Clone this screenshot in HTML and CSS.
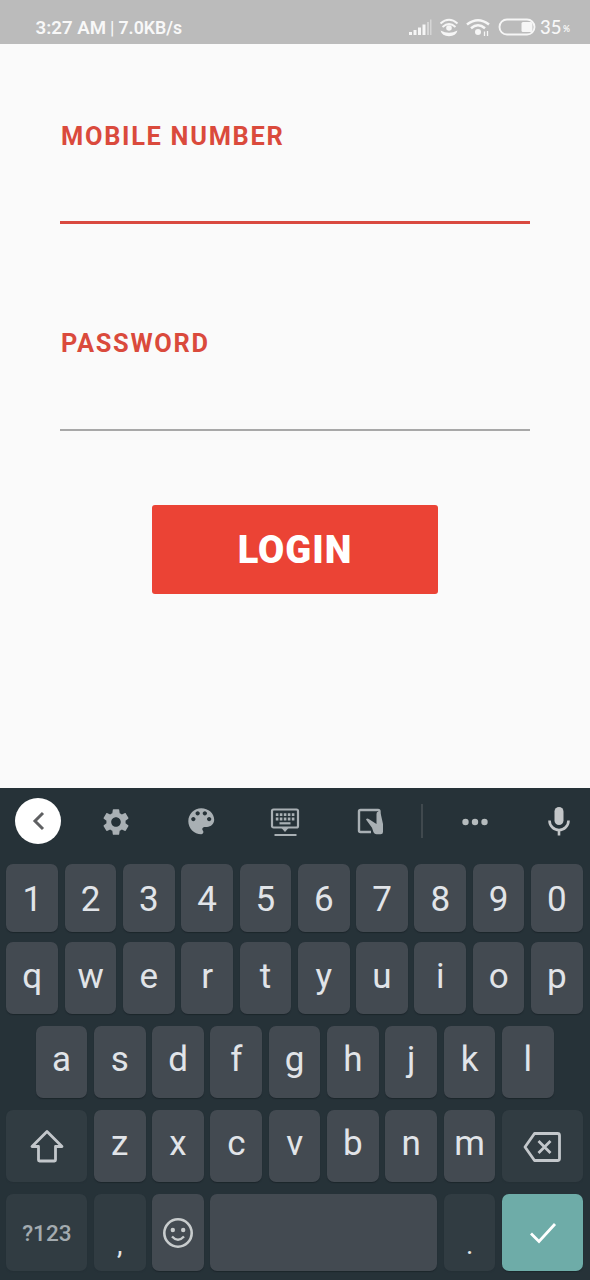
FILE: index.html
```html
<!DOCTYPE html>
<html lang="en">
<head>
<meta charset="utf-8">
<title>Login</title>
<link rel="stylesheet" href="styles.css">
</head>
<body>
<header class="status">
  <div class="clock"><span class="time">3:27 AM</span><span class="bar">|</span><span class="speed">7.0KB/s</span></div>
  <svg class="signals" width="138" height="22" viewBox="0 0 138 22" fill="none" stroke="#f6f6f6">
    <g fill="#f6f6f6" stroke="none">
      <path d="M1 17h3v3H1zM5.500 15h3v5h-3zM10 12.500h3v7.500h-3zM14.500 9.500h3V20h-3z"/>
      <path d="M19 7h2v13h-2zM22 4.500h1.500V20H22z" opacity=".45"/>
      <circle cx="41" cy="13" r="2.800"/><circle cx="70" cy="17" r="3"/>
      <path d="M32.500 15.500q8.500 4.500 17 0-1.500 5.700-8.500 5.700t-8.500-5.700z"/>
      <rect x="113.500" y="7" width="11" height="10" rx="1.500"/>
    </g>
    <g stroke-width="1.900">
      <path d="M32.500 8.500q8.500-7.500 17 0M34.500 12q6.500-6 13 0"/>
      <path d="M36.500 15.500q4.500 2.500 9 0" stroke="#bbb" stroke-width="1"/>
      <path d="M59 9.500q11-8.500 22 0M63 13.300q7-6 14 0" stroke-width="2.500"/>
      <path d="M76.500 16.500v4.500M79.500 16v5" stroke-width="1.300"/>
      <rect x="91.500" y="4.500" width="35" height="15" rx="7.500"/>
    </g>
  </svg>
  <span class="battery">35</span><span class="percent">%</span>
</header>

<main class="form">
  <div class="field active"><span class="label">MOBILE NUMBER</span></div>
  <div class="field"><span class="label">PASSWORD</span></div>
  <button class="login">LOGIN</button>
</main>

<section class="keyboard">
  <div class="tools">
    <span class="back"><svg width="46" height="46" viewBox="0 0 46 46"><path d="M28 15l-8 8 8 8" fill="none" stroke="#5f6062" stroke-width="3"/></svg></span>
    <svg width="32" height="32" viewBox="0 0 24 24" fill="#a9b0b4"><path d="M19.140 12.940c.04-.3.060-.61.060-.94 0-.32-.02-.64-.07-.94l2.030-1.580c.18-.14.230-.41.120-.61l-1.920-3.320c-.12-.22-.37-.29-.59-.22l-2.390.96c-.5-.38-1.030-.7-1.620-.94l-.36-2.540c-.04-.24-.24-.41-.48-.41h-3.840c-.24 0-.43.17-.47.410l-.36 2.540c-.59.240-1.130.570-1.620.940l-2.390-.96c-.22-.08-.47 0-.59.220L2.740 8.870c-.12.210-.08.470.120.610l2.030 1.580c-.05.300-.09.630-.09.940s.02.640.070.940l-2.030 1.580c-.18.140-.23.410-.12.610l1.920 3.320c.12.220.37.290.59.220l2.390-.96c.5.380 1.030.7 1.620.940l.36 2.540c.05.240.24.410.48.410h3.840c.24 0 .44-.17.470-.41l.36-2.540c.59-.24 1.130-.56 1.620-.94l2.390.96c.22.080.47 0 .59-.22l1.920-3.320c.12-.22.070-.47-.12-.61l-2.010-1.580zM12 15.600c-1.980 0-3.600-1.620-3.600-3.600s1.620-3.600 3.600-3.600 3.600 1.620 3.600 3.600-1.620 3.600-3.600 3.600z"/></svg>
    <svg width="34.500" height="34.500" viewBox="0 0 24 24" fill="#a9b0b4"><path d="M12 3c-4.970 0-9 4.030-9 9s4.030 9 9 9c.83 0 1.500-.67 1.500-1.500 0-.39-.15-.74-.39-1.010-.23-.26-.38-.61-.38-.99 0-.83.67-1.500 1.500-1.500H16c2.760 0 5-2.240 5-5 0-4.420-4.030-8-9-8zm-5.500 9c-.83 0-1.500-.67-1.500-1.500S5.670 9 6.500 9 8 9.670 8 10.500 7.330 12 6.500 12zm3-4C8.670 8 8 7.330 8 6.500S8.670 5 9.500 5s1.500.67 1.500 1.500S10.330 8 9.500 8zm5 0c-.83 0-1.500-.67-1.500-1.500S13.670 5 14.500 5s1.500.67 1.500 1.500S15.330 8 14.500 8zm3 4c-.83 0-1.500-.67-1.500-1.500S16.670 9 17.500 9s1.500.67 1.500 1.500-.67 1.500-1.500 1.500z"/></svg>
    <svg width="30" height="28" viewBox="0 0 30 28" fill="none" stroke="#a9b0b4" stroke-width="2.200"><rect x="2" y="1.500" width="26" height="18" rx="1.500"/><path d="M5.800 6.700h18.600M5.800 11h18.600" stroke-width="2.800" stroke-dasharray="2.600 1.400"/><path d="M9.500 15.300h11"/><path d="M4.500 27h22" stroke-width="2"/><path d="M11.500 20h7L15 24z" fill="#a9b0b4" stroke="none"/></svg>
    <svg width="26" height="27" viewBox="0 0 26 27"><path d="M14 24H3.500Q2 24 2 22.500V3.500Q2 2 3.500 2H21Q22.500 2 22.500 3.500V9" fill="none" stroke="#a9b0b4" stroke-width="2.400"/><path d="M9 11.500q1-1.800 2.700-.6L19.500 16V6q0-3 3-2l1.500 3 2 9v8q0 2.300-2.500 2.300h-4q-2 0-3-2l-1.500-4.500z" fill="#a9b0b4"/></svg>
    <i class="divider"></i>
    <svg width="26" height="8" viewBox="0 0 26 8" fill="#b5bbbd"><circle cx="3.500" cy="4" r="3.200"/><circle cx="13" cy="4" r="3.200"/><circle cx="22.500" cy="4" r="3.200"/></svg>
    <svg class="mic" width="22" height="30" viewBox="0 0 22 30"><rect x="6.500" y="1" width="9" height="18" rx="4.500" fill="#c3c6c8"/><path d="M1.500 14.500a9.500 9.500 0 0 0 19 0M11 24v5.500" fill="none" stroke="#c3c6c8" stroke-width="2.600"/></svg>
  </div>

  <div class="row digits"><span class="key">1</span><span class="key">2</span><span class="key">3</span><span class="key">4</span><span class="key">5</span><span class="key">6</span><span class="key">7</span><span class="key">8</span><span class="key">9</span><span class="key">0</span></div>
  <div class="row upper"><span class="key">q</span><span class="key">w</span><span class="key">e</span><span class="key">r</span><span class="key">t</span><span class="key">y</span><span class="key">u</span><span class="key">i</span><span class="key">o</span><span class="key">p</span></div>
  <div class="row home"><span class="key">a</span><span class="key">s</span><span class="key">d</span><span class="key">f</span><span class="key">g</span><span class="key">h</span><span class="key">j</span><span class="key">k</span><span class="key">l</span></div>
  <div class="row lower">
    <span class="key dark wide"><svg width="34" height="34" viewBox="0 0 34 34"><path d="M17 2.500L2 17.500h6.500V31q0 1 1 1h15q1 0 1-1V17.500H32z" fill="none" stroke="#c3c7cb" stroke-width="2.800" stroke-linejoin="round"/></svg></span>
    <span class="key">z</span><span class="key">x</span><span class="key">c</span><span class="key">v</span><span class="key">b</span><span class="key">n</span><span class="key">m</span>
    <span class="key dark wide delete"><svg width="38" height="30" viewBox="0 0 38 30" fill="none" stroke="#c3c7cb" stroke-width="2.800" stroke-linejoin="round"><path d="M11.500 1.500H34.500Q36.500 1.500 36.500 3.500V26.500Q36.500 28.500 34.500 28.500H11.500L2 15z"/><path d="M15.500 9l12 12M27.500 9l-12 12"/></svg></span>
  </div>
  <div class="row bottom">
    <span class="key dark wide symbols">?123</span>
    <span class="key dark punct">,</span>
    <span class="key"><svg width="32" height="32" viewBox="0 0 32 32"><circle cx="16" cy="16" r="13.700" fill="none" stroke="#c8cccd" stroke-width="2.600"/><circle cx="10.800" cy="13" r="2.200" fill="#c8cccd"/><circle cx="21.200" cy="13" r="2.200" fill="#c8cccd"/><path d="M10 19.500q6 6.500 12 0" fill="none" stroke="#c8cccd" stroke-width="2.400"/></svg></span>
    <span class="key space"></span>
    <span class="key dark punct">.</span>
    <span class="key wide enter"><svg width="28" height="22" viewBox="0 0 28 22"><path d="M2 11.500l8 8L26 2" fill="none" stroke="#fff" stroke-width="2.800"/></svg></span>
  </div>
</section>
</body>
</html>
```

FILE: styles.css
```css
* { box-sizing: border-box; }
body {
  margin: 0;
  width: 590px;
  height: 1280px;
  overflow: hidden;
  display: flex;
  flex-direction: column;
  background: #fafafa;
  font-family: Roboto, "Liberation Sans", sans-serif;
}
.status {
  height: 44px;
  background: #bbb;
  color: #f8f8f8;
  display: flex;
  align-items: center;
  padding: 10px 19px 0 35.500px;
}
.clock { flex: 1; display: flex; align-items: baseline; font-weight: 600; padding-top: 1px; }
.time { font-size: 18.700px; }
.bar { font-size: 18px; font-weight: 400; margin: 0 4px; }
.speed { font-size: 17.700px; }
.signals { margin-top: -2px; }
.battery { font: 500 18.500px Lato, sans-serif; width: 23px; margin-left: -6px; }
.percent { font: 700 8.500px Lato, sans-serif; margin-top: 4px; width: 8px; }
.form { height: 744px; padding: 0 60px; display: flex; flex-direction: column; }
.field { height: 207px; padding: 105px 1px 0; border-bottom: 2px solid #a8a8a8; }
.active { height: 180px; padding-top: 78px; border-bottom: 3px solid #d9493f; }
.label { display: block; font-size: 25.400px; line-height: 29px; font-weight: 700; letter-spacing: 1.700px; color: #da4a3c; white-space: nowrap; }
.login {
  align-self: center;
  width: 286px;
  height: 89px;
  margin-top: 74px;
  border: 0;
  border-radius: 3px;
  background: #eb4335;
  color: #fff;
  font: 900 38px Roboto, sans-serif;
  letter-spacing: 1px;
  padding: 0;
}
.keyboard { height: 492px; background: #263238; padding: 0 6.400px; }
.tools {
  height: 76px;
  padding-bottom: 10px;
  margin: 0 -6.400px;
  display: grid;
  grid-template-columns: 76px 80px 90px 78px 92px 12px 94px 68px;
  align-items: center;
  justify-items: center;
}
.back { width: 46px; height: 46px; border-radius: 50%; background: #fff; }
.tools svg { display: block; margin-top: 1px; }
.tools .back svg { margin-top: 0; }
.divider { width: 1.500px; height: 34px; background: #40494e; }
.tools .mic { margin-left: 6px; margin-top: 0; }
.row { display: flex; gap: 6.620px; height: 71.500px; margin-bottom: 12.500px; }
.key {
  width: 51.700px;
  flex: none;
  border-radius: 7px;
  background: #434a51;
  box-shadow: 0 1px 1px #1c262b;
  color: #e1e4e8;
  font-size: 35px;
  line-height: 41px;
  display: flex;
  align-items: center;
  justify-content: center;
}
.digits { height: 67.500px; margin-bottom: 10.500px; }
.digits .key { padding-top: 4px; }
.upper .key { padding-bottom: 2px; }
.home { padding-left: 29.200px; }
.home .key, .lower .key { padding-bottom: 4px; }
.lower .wide { padding-bottom: 0; }
.lower .delete { padding-top: 2px; }
.wide { width: 80.900px; }
.dark { background: #313c42; box-shadow: 0 1px 1px #253036; }
.bottom { height: 77px; margin-bottom: 0; }
.symbols { font-size: 22.500px; font-weight: 500; color: #a3abb0; padding-top: 1px; }
.punct { font-size: 28px; padding-top: 24px; }
.space { width: 226.700px; }
.enter { background: #6eaca8; box-shadow: 0 1px 1px #1c262b; }
```
